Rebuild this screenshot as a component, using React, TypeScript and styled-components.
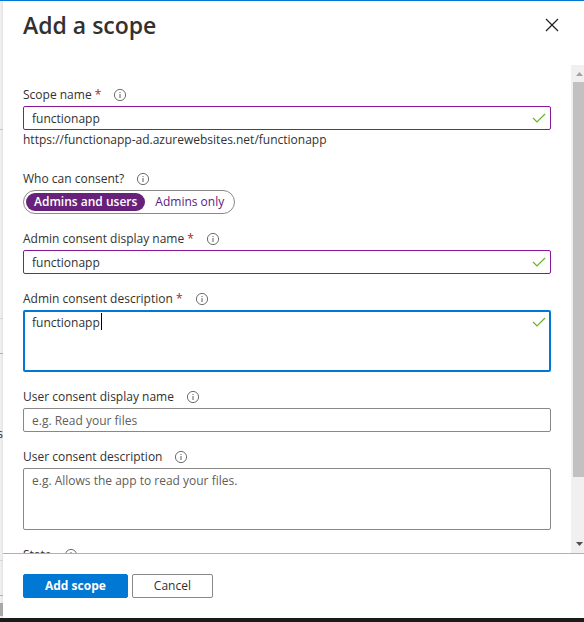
import React, { useLayoutEffect, useRef, useState } from "react";
import styled, { createGlobalStyle, css } from "styled-components";

const FONT = '"Segoe UI", "Open Sans", "Noto Sans", sans-serif';

const GlobalStyle = createGlobalStyle`
  * { box-sizing: border-box; }
  body {
    margin: 0;
    color: #323130;
    font: 12px/20px ${FONT};
    overflow: hidden;
  }
  button, input, textarea { font: inherit; color: inherit; }
`;

const Page = styled.div`
  display: flex;
  flex-direction: column;
  height: 100vh;
  background: #fff;
  border-top: 1px solid #0078d4;
  border-bottom: 4px solid #1b1a1a;
`;

const Columns = styled.div`
  display: flex;
  flex: 1;
  min-height: 0;
`;

const Backdrop = styled.div`
  display: flex;
  flex-direction: column;
  flex: 0 0 3px;
  overflow: hidden;
  background: linear-gradient(to right, #f3f2f1, #e3e3e3);
`;

const BackdropRow = styled.div<{ $size: number; $line?: string }>`
  display: flex;
  justify-content: flex-end;
  align-items: flex-end;
  flex: 0 0 ${(p) => p.$size}px;
  border-bottom: 1px solid ${(p) => p.$line ?? "transparent"};
`;

const BackdropThumb = styled.div`
  flex: 0 0 13px;
  background: #a8a8a8;
`;

const Panel = styled.section`
  display: flex;
  flex-direction: column;
  flex: 1;
  min-width: 0;
  background: #fff;
`;

const Header = styled.header`
  display: flex;
  align-items: flex-start;
  justify-content: space-between;
  flex: 0 0 64px;
  padding: 8px 24px 0 20px;
`;

const Title = styled.h1`
  margin: 0;
  font-size: 23px;
  line-height: 32px;
  font-weight: 600;
`;

const CloseButton = styled.button`
  display: flex;
  align-items: center;
  justify-content: center;
  width: 16px;
  height: 32px;
  padding: 0;
  border: 0;
  background: none;
`;

const ScrollArea = styled.div`
  display: flex;
  flex: 1;
  min-height: 0;
`;

const Form = styled.form`
  display: flex;
  flex-direction: column;
  gap: 14px;
  flex: 1;
  min-width: 0;
  padding: 19px 20px 0;
  overflow: hidden;
`;

const Field = styled.div`
  display: flex;
  flex-direction: column;
  flex: none;
`;

const LabelRow = styled.div`
  display: flex;
  align-items: center;
  gap: 12px;
  height: 22px;
`;

const Required = styled.span`
  color: #a4262c;
`;

const InfoButton = styled.button`
  display: flex;
  padding: 0;
  border: 0;
  background: none;
`;

const Control = styled.div`
  position: relative;
  display: flex;
`;

const box = css<{ $valid?: boolean }>`
  width: 100%;
  margin: 0;
  border: 1px solid ${(p) => (p.$valid ? "#881798" : "#8a8886")};
  border-radius: 2px;
  background: #fff;
  outline: 0;
  &::placeholder { color: #605e5c; opacity: 1; }
`;

const TextInput = styled.input<{ $valid?: boolean }>`
  ${box}
  height: 24px;
  padding: 0 32px 0 8px;
`;

const TextArea = styled.textarea<{ $valid?: boolean; $active?: boolean }>`
  ${box}
  display: block;
  height: 62px;
  padding: 2px 32px 2px 8px;
  resize: none;
  ${(p) =>
    p.$active &&
    css`
      padding: 1px 31px 1px 7px;
      border: 2px solid #0078d4;
      caret-color: transparent;
    `}
`;

const CheckMark = styled.svg`
  position: absolute;
  top: 7px;
  right: 5px;
`;

const Caret = styled.span`
  position: absolute;
  top: 3px;
  width: 1px;
  height: 17px;
  background: #000;
`;

const Hint = styled.div`
  height: 24px;
  line-height: 19px;
`;

const Toggle = styled.div`
  display: flex;
  align-self: flex-start;
  height: 24px;
  padding: 2px;
  border: 1px solid #8a8886;
  border-radius: 12px;
`;

const ToggleOption = styled.button<{ $selected?: boolean }>`
  height: 18px;
  padding: 0 8px;
  border: 0;
  border-radius: 9px;
  line-height: 18px;
  color: ${(p) => (p.$selected ? "#fff" : "#5c2081")};
  background: ${(p) => (p.$selected ? "#68217a" : "transparent")};
  font-weight: ${(p) => (p.$selected ? 600 : 400)};
  & + & { margin-left: 2px; }
`;

const Scrollbar = styled.div`
  display: flex;
  flex-direction: column;
  flex: 0 0 13px;
  padding-left: 2px;
  background: #f0f0f0;
`;

const ScrollArrow = styled.svg`
  flex: 0 0 17px;
`;

const Track = styled.div`
  flex: 1;
`;

const Thumb = styled.div`
  height: 87%;
  background: #c1c1c1;
`;

const Footer = styled.footer`
  display: flex;
  gap: 4px;
  flex: 0 0 65px;
  padding: 20px 20px 0;
  border-top: 1px solid #b3b0ad;
`;

const ActionButton = styled.button<{ $primary?: boolean }>`
  height: 24px;
  padding: 0 21px;
  border: 1px solid ${(p) => (p.$primary ? "#0078d4" : "#8a8886")};
  border-radius: 2px;
  line-height: 22px;
  color: ${(p) => (p.$primary ? "#fff" : "#323130")};
  background: ${(p) => (p.$primary ? "#0078d4" : "#fff")};
  font-weight: ${(p) => (p.$primary ? 700 : 500)};
`;

function Info({ topic }: { topic: string }) {
  return (
    <InfoButton type="button" aria-label={`About ${topic}`}>
      <svg width="14" height="14" viewBox="0 0 14 14">
        <circle cx="7" cy="7" r="5.6" fill="none" stroke="#605e5c" strokeWidth="0.9" />
        <path d="M7 6v4M7 4v1" stroke="#605e5c" strokeWidth="1" />
      </svg>
    </InfoButton>
  );
}

function Valid() {
  return (
    <CheckMark width="14" height="10" viewBox="0 0 14 10" aria-hidden="true">
      <path d="M1 5l4 4 8-8" fill="none" stroke="#6bb12a" strokeWidth="1.2" />
    </CheckMark>
  );
}

type LabelProps = { id?: string; text: string; required?: boolean };

function FieldLabel({ id, text, required }: LabelProps) {
  return (
    <LabelRow>
      <label htmlFor={id}>
        {text}
        {required && <Required> *</Required>}
      </label>
      <Info topic={text} />
    </LabelRow>
  );
}

type FieldProps = {
  id: string;
  label: string;
  required?: boolean;
  initial?: string;
  placeholder?: string;
  hint?: string;
};

function TextField({ id, label, required, initial = "", placeholder, hint }: FieldProps) {
  const [value, setValue] = useState(initial);
  const valid = value !== "";
  return (
    <Field>
      <FieldLabel id={id} text={label} required={required} />
      <Control>
        <TextInput
          id={id}
          $valid={valid}
          value={value}
          placeholder={placeholder}
          onChange={(e) => setValue(e.target.value)}
        />
        {valid && <Valid />}
      </Control>
      {hint && <Hint>{hint}</Hint>}
    </Field>
  );
}

function AreaField({ id, label, required, initial = "", placeholder, active }: FieldProps & { active?: boolean }) {
  const [value, setValue] = useState(initial);
  const [caretX, setCaretX] = useState(9);
  const area = useRef<HTMLTextAreaElement>(null);
  const valid = value !== "";

  useLayoutEffect(() => {
    const ctx = document.createElement("canvas").getContext("2d");
    if (!area.current || !ctx) return;
    ctx.font = `12px ${FONT}`;
    setCaretX(10 + Math.round(ctx.measureText(value).width));
  }, [value]);

  return (
    <Field>
      <FieldLabel id={id} text={label} required={required} />
      <Control>
        <TextArea
          id={id}
          ref={area}
          $valid={valid}
          $active={active}
          value={value}
          placeholder={placeholder}
          onChange={(e) => setValue(e.target.value)}
        />
        {valid && <Valid />}
        {active && <Caret style={{ left: caretX }} />}
      </Control>
    </Field>
  );
}

export default function App() {
  const [everyone, setEveryone] = useState(true);
  return (
    <Page>
      <GlobalStyle />
      <Columns>
        <Backdrop>
          <BackdropRow $size={129} $line="#c8c6c4" />
          <BackdropRow $size={189} $line="#d8d6d4" />
          <BackdropRow $size={35} $line="#b3b0ad" />
          <BackdropRow $size={91}>s</BackdropRow>
          <BackdropRow $size={116} $line="#d8d6d4" />
          <BackdropRow $size={35} $line="#b3b0ad" />
          <BackdropRow $size={7} />
          <BackdropThumb />
        </Backdrop>
        <Panel aria-labelledby="panel-title">
          <Header>
            <Title id="panel-title">Add a scope</Title>
            <CloseButton type="button" aria-label="Close">
              <svg width="14" height="14" viewBox="0 0 14 14">
                <path d="M1 1l12 12M13 1L1 13" stroke="#201f1e" strokeWidth="1.2" />
              </svg>
            </CloseButton>
          </Header>
          <ScrollArea>
            <Form id="scope-form" onSubmit={(e) => e.preventDefault()}>
              <TextField
                id="scope-name"
                label="Scope name"
                required
                initial="functionapp"
                hint="https://functionapp-ad.azurewebsites.net/functionapp"
              />
              <Field>
                <FieldLabel text="Who can consent?" />
                <Toggle role="group" aria-label="Who can consent?">
                  <ToggleOption type="button" $selected={everyone} aria-pressed={everyone} onClick={() => setEveryone(true)}>
                    Admins and users
                  </ToggleOption>
                  <ToggleOption type="button" $selected={!everyone} aria-pressed={!everyone} onClick={() => setEveryone(false)}>
                    Admins only
                  </ToggleOption>
                </Toggle>
              </Field>
              <TextField id="admin-name" label="Admin consent display name" required initial="functionapp" />
              <AreaField id="admin-description" label="Admin consent description" required initial="functionapp" active />
              <TextField id="user-name" label="User consent display name" placeholder="e.g. Read your files" />
              <AreaField
                id="user-description"
                label="User consent description"
                placeholder="e.g. Allows the app to read your files."
              />
              <Field>
                <FieldLabel text="State" />
              </Field>
            </Form>
            <Scrollbar aria-hidden="true">
              <ScrollArrow width="11" height="17" viewBox="0 0 11 17">
                <path d="M3 11l3.500-4 3.500 4z" fill="#a3a3a3" />
              </ScrollArrow>
              <Track>
                <Thumb />
              </Track>
              <ScrollArrow width="11" height="17" viewBox="0 0 11 17">
                <path d="M3 6l3.500 4 3.500-4z" fill="#505050" />
              </ScrollArrow>
            </Scrollbar>
          </ScrollArea>
          <Footer>
            <ActionButton type="submit" form="scope-form" $primary>
              Add scope
            </ActionButton>
            <ActionButton type="button">Cancel</ActionButton>
          </Footer>
        </Panel>
      </Columns>
    </Page>
  );
}
